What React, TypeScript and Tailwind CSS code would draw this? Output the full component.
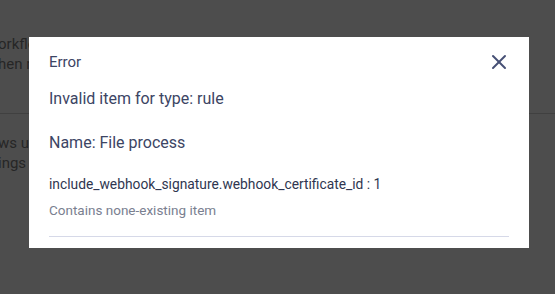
import { X } from "lucide-react";

export default function App() {
  return (
    <div
      className="relative w-[555px] h-[294px] overflow-hidden bg-[#4d4d4d]"
      style={{ fontFamily: "Roboto, 'Liberation Sans', sans-serif" }}
    >
      {/* page behind the overlay */}
      <div className="flex flex-col pt-[34px] text-[15px] text-[#262626] -ml-[2px]">
        <p className="h-[20px] leading-[20px] w-[31px] overflow-hidden whitespace-nowrap">orkflows</p>
        <p className="h-[20px] leading-[20px] w-[31px] overflow-hidden whitespace-nowrap">hen rules</p>
        <div className="mt-[39px] h-px w-full bg-[#404040]" />
        <p className="mt-[19px] h-[20px] leading-[20px] w-[31px] overflow-hidden whitespace-nowrap">ws users</p>
        <p className="h-[20px] leading-[20px] w-[31px] overflow-hidden whitespace-nowrap">ings and</p>
      </div>

      <div className="absolute left-[29px] top-[37px] w-[500px] h-[211px] bg-white px-[20px] pt-[15px]">
        <div className="flex items-center justify-between h-[20px]">
          <h2 className="text-[15px] leading-[20px] text-[#3c4564]">Error</h2>
          <button className="text-[#465075] -mr-[2px]">
            <X size={24} strokeWidth={2} />
          </button>
        </div>
        <p className="mt-[17px] text-[16px] leading-[20px] text-[#3c4564]">
          Invalid item for type: rule
        </p>
        <p className="mt-[24px] text-[16px] leading-[20px] text-[#3c4564]">
          Name: File process
        </p>
        <p className="mt-[21px] text-[13.8px] leading-[20px] text-[#2f3650]">
          include_webhook_signature.webhook_certificate_id : 1
        </p>
        <p className="mt-[6px] text-[13.5px] leading-[20px] text-[#7a8090]">
          Contains none-existing item
        </p>
        <div className="mt-[16px] h-px bg-[#d6d9e8]" />
      </div>
    </div>
  );
}
